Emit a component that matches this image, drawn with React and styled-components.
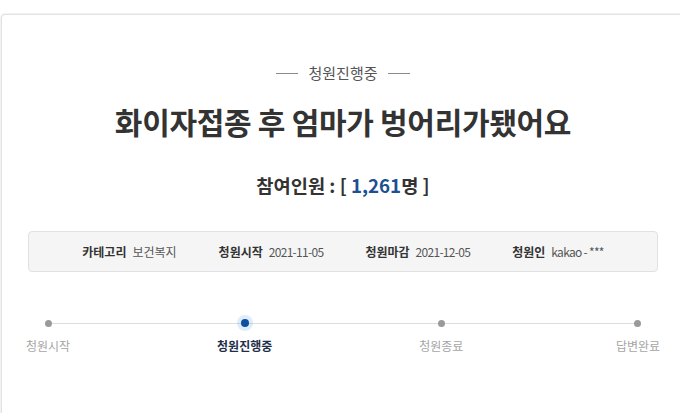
import React from "react";
import styled, { createGlobalStyle } from "styled-components";

const Global = createGlobalStyle`
  html, body { margin: 0; padding: 0; background: #fff; overflow: hidden; }
  body { font-family: "Noto Sans CJK KR", "Noto Sans", sans-serif; color: #333; }
`;

const Page = styled.div`
  padding: 14px 0 0 1px;
  width: 700px;
`;

const Card = styled.section`
  width: 684px;
  min-height: 420px;
  box-sizing: border-box;
  border: 1px solid #e2e2e2;
  box-shadow: 0 0 0 1px #f2f2f2;
  border-radius: 4px 0 0 0;
  padding: 48px 26px 0 26px;
  background: #fff;
`;

const Status = styled.div`
  display: flex;
  align-items: center;
  justify-content: center;
  gap: 10px;
  font-size: 15px;
  line-height: 20px;
  color: #555;
  &::before, &::after {
    content: "";
    width: 22px;
    height: 1px;
    background: #8a8a8a;
  }
`;

const Title = styled.h1`
  margin: 19px 0 0;
  text-align: center;
  font-size: 30px;
  line-height: 38px;
  font-weight: 700;
  color: #333;
  letter-spacing: -0.3px;
`;

const Count = styled.p`
  margin: 33px 0 0;
  text-align: center;
  font-size: 18.7px;
  line-height: 24px;
  font-weight: 700;
  color: #333;
`;

const Number = styled.span`
  color: #1d4f91;
`;

const InfoBox = styled.ul`
  list-style: none;
  margin: 34px 0 0;
  padding: 0;
  height: 41px;
  box-sizing: border-box;
  display: flex;
  align-items: center;
  justify-content: center;
  gap: 42px;
  background: #f5f5f5;
  border: 1px solid #e1e1e1;
  border-radius: 4px;
  font-size: 12px;
`;

const InfoItem = styled.li`
  display: flex;
  align-items: center;
  gap: 6px;
`;

const InfoLabel = styled.strong`
  font-weight: 700;
  color: #333;
`;

const InfoValue = styled.span`
  color: #555;
  letter-spacing: ${(p) => (p.$latin ? "-0.7px" : "0")};
`;

const Steps = styled.ol`
  position: relative;
  list-style: none;
  margin: 44px -10px 0;
  padding: 0;
  display: flex;
  justify-content: space-between;
  &::before {
    content: "";
    position: absolute;
    left: 30px;
    right: 30px;
    top: 7px;
    height: 1px;
    background: #dcdcdc;
  }
`;

const Step = styled.li`
  position: relative;
  width: 60px;
  display: flex;
  flex-direction: column;
  align-items: center;
  gap: 8px;
`;

const DotRow = styled.span`
  height: 14px;
  display: flex;
  align-items: center;
  justify-content: center;
`;

const Dot = styled.span`
  width: ${(p) => (p.$active ? 8 : 7)}px;
  height: ${(p) => (p.$active ? 8 : 7)}px;
  border-radius: 50%;
  background: ${(p) => (p.$active ? "#0d4fa0" : "#9a9a9a")};
  box-shadow: ${(p) => (p.$active ? "0 0 0 4px rgba(80,150,230,0.18)" : "none")};
`;

const StepLabel = styled.span`
  white-space: nowrap;
  font-size: 12px;
  line-height: 16px;
  color: ${(p) => (p.$active ? "#1f2f4a" : "#a5a5a5")};
  font-weight: ${(p) => (p.$active ? 700 : 400)};
`;

const info = [
  ["카테고리", "보건복지", false],
  ["청원시작", "2021-11-05", true],
  ["청원마감", "2021-12-05", true],
  ["청원인", "kakao - ***", true],
];

const steps = ["청원시작", "청원진행중", "청원종료", "답변완료"];

export default function App() {
  return (
    <>
      <Global />
      <Page>
        <Card>
          <Status>청원진행중</Status>
          <Title>화이자접종 후 엄마가 벙어리가됐어요</Title>
          <Count>
            참여인원 : [ <Number>1,261</Number>명 ]
          </Count>
          <InfoBox>
            {info.map(([k, v, latin]) => (
              <InfoItem key={k}>
                <InfoLabel>{k}</InfoLabel>
                <InfoValue $latin={latin}>{v}</InfoValue>
              </InfoItem>
            ))}
          </InfoBox>
          <Steps>
            {steps.map((s, i) => (
              <Step key={s}>
                <DotRow>
                  <Dot $active={i === 1} />
                </DotRow>
                <StepLabel $active={i === 1}>{s}</StepLabel>
              </Step>
            ))}
          </Steps>
        </Card>
      </Page>
    </>
  );
}
